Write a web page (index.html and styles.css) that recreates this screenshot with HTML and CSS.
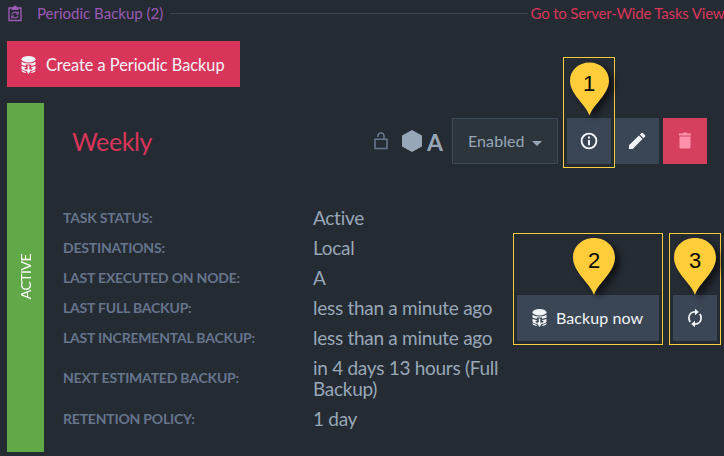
FILE: index.html
```html
<!DOCTYPE html>
<html lang="en">
<head>
<meta charset="utf-8">
<title>Periodic Backup</title>
<link rel="stylesheet" href="styles.css">
</head>
<body>
<svg class="defs" width="0" height="0" aria-hidden="true">
  <symbol id="database" viewBox="0 0 15 18">
    <ellipse cx="7.5" cy="3.2" rx="7" ry="3.2"/>
    <path d="M.5 5.500C2 8 13 8 14.500 5.500V8.600C13.500 9.300 12 9.700 10.200 9.900V8.600H4.800V9.900C3 9.700 1.500 9.300.5 8.600Z"/>
    <path d="M.5 9.700C1.500 10.400 3 10.800 4.800 11V12H3.200L5.300 15C3.200 14.700.8 14 .5 12.700Z"/>
    <path d="M14.500 9.700C13.500 10.400 12 10.800 10.200 11V12H11.800L9.700 15C11.800 14.700 14.200 14 14.500 12.700Z"/>
    <path d="M6.700 9.400H8.300V13.500H10.500L7.500 18L4.500 13.500H6.700Z"/>
    <path d="M.6 14Q2 15.300 4.300 15.700L5.400 17C3 16.800.6 16.100.6 15ZM14.400 14Q13 15.300 10.700 15.700L9.600 17C12 16.800 14.400 16.100 14.400 15Z"/>
  </symbol>
  <symbol id="pin" viewBox="0 0 42 57">
    <path d="M21 57C17 45 0 34 0 19.500C0 8.500 9 0 21 0S42 8.500 42 19.500C42 34 25 45 21 57Z"/>
  </symbol>
</svg>

<header class="section-head">
  <svg class="clipboard" width="14" height="17" viewBox="0 0 14 17">
    <path d="M1 3H13V15.500H1Z" fill="none" stroke="currentColor" stroke-width="1.400"/>
    <path d="M3.500 2.200H5.200Q5.200.5 7 .5T8.800 2.200H10.500V5H3.500Z" fill="currentColor"/>
    <path d="M3.800 9.300Q4.500 7.100 7 7.100Q8.500 7.100 9.600 8.100M10.300 6.500V9H7.900M10.200 10.600Q9.500 12.900 7 12.900Q5.500 12.900 4.400 11.900M3.700 13.500V11H6.100" fill="none" stroke="currentColor" stroke-width="1.100"/>
  </svg>
  <span class="section-title">Periodic Backup (2)</span>
  <span class="rule"></span>
  <a class="link">Go to Server-Wide Tasks View</a>
</header>

<button class="btn create"><svg class="db" width="15" height="18"><use href="#database"/></svg><span>Create a Periodic Backup</span></button>

<main class="panel">
  <div class="state"><span>ACTIVE</span></div>
  <div class="body">
    <div class="top">
      <h3>Weekly</h3>
      <svg class="lock" width="14" height="18" viewBox="0 0 14 18"><path d="M1 7.200H13V16.500H1ZM4 5V4Q4 1 7 1T10 4V7" fill="none" stroke="currentColor" stroke-width="1.600"/></svg>
      <svg class="hex" width="20" height="22" viewBox="0 0 20 22"><path d="M10 0L20 5.500V16.500L10 22L0 16.500V5.500Z" fill="currentColor"/></svg>
      <span class="node">A</span>
      <button class="btn dropdown"><span>Enabled</span><i class="caret"></i></button>
      <button class="btn icon info"><svg width="18" height="18" viewBox="0 0 18 18"><circle cx="9" cy="9" r="7.400" fill="none" stroke="currentColor" stroke-width="1.900"/><path d="M8 4.600H10V6.600H8ZM8 8H10V13.200H8Z" fill="currentColor"/></svg></button>
      <button class="btn icon"><svg width="18" height="18" viewBox="0 0 18 18"><path d="M1 13.300L10.900 3.500L14.500 7.100L4.700 17H1ZM11.800 2.600L13.600.9Q14.200.4 14.800.9L17.100 3.200Q17.600 3.800 17.100 4.400L15.400 6.200Z" fill="currentColor"/></svg></button>
      <button class="btn icon danger"><svg width="14" height="18" viewBox="0 0 14 18"><path d="M1.500 4.500H12.500V15Q12.500 16.500 11 16.500H3Q1.500 16.500 1.500 15ZM1 1.500H4.500L5.300.5H8.700L9.500 1.500H13V3.500H1Z" fill="currentColor"/></svg></button>
    </div>
    <div class="content">
      <dl class="details">
        <dt>Task Status:</dt><dd>Active</dd>
        <dt>Destinations:</dt><dd>Local</dd>
        <dt>Last executed on node:</dt><dd>A</dd>
        <dt>Last Full Backup:</dt><dd>less than a minute ago</dd>
        <dt>Last Incremental Backup:</dt><dd>less than a minute ago</dd>
        <dt>Next Estimated Backup:</dt><dd>in 4 days 13 hours (Full Backup)</dd>
        <dt>Retention Policy:</dt><dd>1 day</dd>
      </dl>
      <div class="actions">
        <button class="btn now"><svg class="db" width="15" height="18"><use href="#database"/></svg><span>Backup now</span></button>
        <button class="btn icon"><svg width="16" height="20" viewBox="0 0 16 20"><path d="M3.200 14Q1.900 12.200 1.900 10C1.900 6.500 4.500 3.900 8 3.900H9M12.800 6Q14.100 7.800 14.100 10C14.100 13.500 11.500 16.100 8 16.100H7" fill="none" stroke="currentColor" stroke-width="1.800"/><path d="M8 .8L11.800 4L8 7.200ZM8 12.800L4.200 16L8 19.200Z" fill="currentColor"/></svg></button>
      </div>
    </div>
  </div>
</main>

<div class="callout one"><svg class="pin"><use href="#pin"/></svg><span>1</span></div>
<div class="callout two"><svg class="pin"><use href="#pin"/></svg><span>2</span></div>
<div class="callout three"><svg class="pin"><use href="#pin"/></svg><span>3</span></div>
</body>
</html>
```
FILE: styles.css
```css
* { box-sizing: border-box; }
body {
  margin: 0;
  width: 724px;
  height: 456px;
  overflow: hidden;
  background: #252b33;
  color: #98a7b7;
  font-family: Lato, sans-serif;
  font-size: 16px;
}
svg { display: block; flex: none; }
.defs { position: absolute; }
.section-head {
  display: flex;
  align-items: center;
  height: 26px;
  padding-left: 8px;
  white-space: nowrap;
  font-size: 15px;
  color: #9b59b6;
}
.clipboard { margin: 1px 15px 0 0; }
.section-title { width: 134px; flex: none; }
.rule { width: 357px; height: 1px; margin-right: 2.500px; background: #3d4654; flex: none; }
.link { flex: none; color: #d9355a; letter-spacing: -.18px; margin-top: -1px; }
.btn {
  display: flex;
  align-items: center;
  flex: none;
  height: 46px;
  margin: 0;
  padding: 0;
  border: 0;
  font: 17px/20px Lato, sans-serif;
  color: #f0f4f8;
  background: #3b4654;
  white-space: nowrap;
}
.db { fill: currentColor; }
.create { width: 233px; margin: 15px 0 0 7px; padding: 2px 0 0 14px; gap: 10px; background: #d9355a; font-size: 16.3px; }
.panel { display: flex; height: 349px; margin: 16px 0 0 7px; }
.state {
  display: flex;
  align-items: center;
  justify-content: center;
  width: 37px;
  background: #61a948;
  color: #fff;
  font-size: 14px;
  letter-spacing: -.5px;
}
.state span { writing-mode: vertical-rl; transform: rotate(180deg); margin-bottom: 2px; }
.body { flex: 1; }
.top { display: flex; align-items: center; height: 46px; margin-top: 15px; }
h3 { width: 301px; margin: 0; padding-left: 28px; font-size: 25px; line-height: 30px; letter-spacing: -.4px; font-weight: 400; color: #d9355a; }
.lock { margin-left: 29px; color: #66758c; }
.hex { margin-left: 14px; }
.node { width: 25px; margin: 2px 0 0 5px; font-size: 23px; line-height: 28px; font-weight: 700; }
.dropdown { width: 106px; margin-right: 9px; padding-left: 15px; border: 1px solid #3d4856; background: #2c343c; color: #98a7b7; font-size: 16px; }
.dropdown span { letter-spacing: .08px; }
.caret { margin: 4px 0 0 7px; border: 5px solid transparent; border-top-color: currentColor; border-bottom: 0; }
.icon { width: 44px; justify-content: center; margin-right: 4px; }
.danger { background: #d4405e; color: #ff91aa; margin-right: 0; }
.content { display: flex; margin-top: 39px; }
.details { display: grid; grid-template-columns: 250px 194px; row-gap: 9px; align-content: start; width: 444px; margin: 4px 0 0 19px; }
dt { align-self: center; font-size: 14px; line-height: 18px; font-weight: 700; letter-spacing: -.2px; color: #66758c; text-transform: uppercase; white-space: nowrap; }
dd { margin: 0; font-size: 19px; line-height: 21px; letter-spacing: -.28px; }
.actions { display: flex; margin: 92px 0 0 10px; }
.now { width: 142px; margin-right: 14px; padding-left: 15px; gap: 9px; font-size: 16px; }
.now span { letter-spacing: .08px; }
.callout { position: absolute; border: 1px solid #ffcc3a; color: #080808; font: 22px/24px "Liberation Sans", sans-serif; }
.callout span { position: absolute; left: 0; width: 100%; top: 15px; text-align: center; }
.pin { position: absolute; fill: #ffcc3a; width: 42px; height: 57px; left: 4px; top: 4px; filter: drop-shadow(5px 4px 3px rgba(0, 0, 0, .55)); }
.one { left: 563px; top: 57px; width: 52px; height: 111px; }
.one .pin { width: 39px; height: 54px; left: 6px; }
.one span { top: 14px; }
.two { left: 513px; top: 233px; width: 150px; height: 112px; }
.two .pin { left: 59px; }
.two span { left: 6px; }
.three { left: 669px; top: 233px; width: 52px; height: 112px; }
```
